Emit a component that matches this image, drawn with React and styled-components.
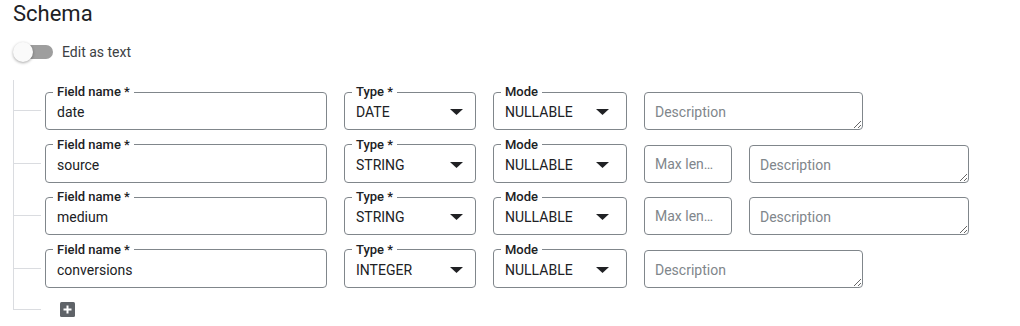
import React from "react";
import styled, { createGlobalStyle } from "styled-components";

const GlobalStyle = createGlobalStyle`
  body {
    margin: 0;
    background: #ffffff;
    font-family: Roboto, "Liberation Sans", Arial, sans-serif;
    color: #202124;
  }
`;

const Page = styled.div`
  padding: 0 13px 16px;
`;

const Heading = styled.h2`
  margin: 0;
  font-size: 22px;
  line-height: 28px;
  font-weight: 400;
  color: #202124;
`;

const ToggleRow = styled.label`
  display: flex;
  align-items: center;
  gap: 9px;
  height: 22px;
  margin-top: 13px;
  font-size: 14px;
  color: #3c4043;
`;

const Switch = styled.span`
  position: relative;
  display: block;
  width: 40px;
  height: 22px;
`;

const Track = styled.span`
  position: absolute;
  left: 6px;
  top: 4px;
  width: 34px;
  height: 14px;
  border-radius: 7px;
  background: #9e9e9e;
`;

const Thumb = styled.span`
  position: absolute;
  left: 0;
  top: 1px;
  width: 20px;
  height: 20px;
  border-radius: 50%;
  background: #fafafa;
  box-shadow: 0 1px 3px rgba(0, 0, 0, 0.35);
`;

const Tree = styled.div`
  margin-top: 17px;
  padding-top: 5px;
  border-left: 1px solid #dadce0;
  display: flex;
  flex-direction: column;
  gap: 7.5px;
`;

const Row = styled.div`
  display: flex;
  align-items: flex-end;
  height: 45px;
`;

const Connector = styled.span`
  flex: none;
  width: 27px;
  height: 1px;
  margin: 0 4px ${({ $lift }) => $lift}px 0;
  background: #dadce0;
`;

const Fields = styled.div`
  display: flex;
  align-items: flex-end;
  gap: 17px;
`;

const Outlined = styled.fieldset`
  box-sizing: border-box;
  width: ${({ $w }) => $w}px;
  height: 45px;
  min-width: 0;
  margin: 0;
  padding: 0 0 4px 7px;
  border: 1px solid #80868b;
  border-radius: 4px;
  display: flex;
  align-items: center;

  legend {
    padding: 0 4px;
    font-size: 13px;
    line-height: 14px;
    font-weight: 500;
    color: #202124;
  }
`;

const TextValue = styled.input`
  flex: 1;
  min-width: 0;
  border: none;
  outline: none;
  padding: 0 0 0 4px;
  font: 14px/20px Roboto, "Liberation Sans", Arial, sans-serif;
  color: #202124;
  background: transparent;
`;

const SelectValue = styled.span`
  flex: 1;
  padding-left: 4px;
  font-size: 14px;
  line-height: 20px;
  color: #202124;
`;

const Caret = styled.svg`
  flex: none;
  margin-right: ${({ $right }) => $right}px;
`;

const Plain = styled.input`
  box-sizing: border-box;
  width: ${({ $w }) => $w}px;
  height: 38px;
  margin: 0;
  padding: 0 10px;
  border: 1px solid #80868b;
  border-radius: 4px;
  outline: none;
  font: 14px/20px Roboto, "Liberation Sans", Arial, sans-serif;
  color: #202124;
  text-overflow: ellipsis;

  &::placeholder {
    color: #80868b;
  }
`;

const Description = styled.textarea`
  box-sizing: border-box;
  display: block;
  width: ${({ $w }) => $w}px;
  height: 38px;
  margin: 0;
  padding: 9px 10px 7px;
  border: 1px solid #80868b;
  border-radius: 4px;
  outline: none;
  overflow: hidden;
  resize: vertical;
  font: 14px/20px Roboto, "Liberation Sans", Arial, sans-serif;
  color: #202124;

  &::placeholder {
    color: #80868b;
  }
`;

const AddRow = styled.div`
  display: flex;
  align-items: center;
  height: 1px;
  margin-top: 13.5px;
`;

const AddButton = styled.svg`
  flex: none;
  margin-left: 15px;
  cursor: pointer;
`;

const fields = [
  { name: "date", type: "DATE", maxLength: false },
  { name: "source", type: "STRING", maxLength: true },
  { name: "medium", type: "STRING", maxLength: true },
  { name: "conversions", type: "INTEGER", maxLength: false },
];

function ArrowDown({ right }) {
  return (
    <Caret $right={right} width="13" height="6" viewBox="0 0 13 6">
      <path d="M0 0 L13 0 L6.5 6 Z" fill="#202124" />
    </Caret>
  );
}

function FieldRow({ field }) {
  return (
    <Row>
      <Connector $lift={19} />
      <Fields>
        <Outlined $w={282}>
          <legend>Field name *</legend>
          <TextValue defaultValue={field.name} />
        </Outlined>
        <Outlined $w={132}>
          <legend>Type *</legend>
          <SelectValue>{field.type}</SelectValue>
          <ArrowDown right={12} />
        </Outlined>
        <Outlined $w={134}>
          <legend>Mode</legend>
          <SelectValue>NULLABLE</SelectValue>
          <ArrowDown right={17} />
        </Outlined>
        {field.maxLength ? (
          <>
            <Plain $w={88} placeholder="Max length" />
            <Description $w={220} placeholder="Description" />
          </>
        ) : (
          <Description $w={219} placeholder="Description" />
        )}
      </Fields>
    </Row>
  );
}

export default function App() {
  return (
    <Page>
      <GlobalStyle />
      <Heading>Schema</Heading>
      <ToggleRow>
        <Switch>
          <Track />
          <Thumb />
        </Switch>
        Edit as text
      </ToggleRow>
      <Tree>
        {fields.map((f) => (
          <FieldRow key={f.name} field={f} />
        ))}
        <AddRow>
          <Connector $lift={0} />
          <AddButton width="15" height="15" viewBox="0 0 15 15">
            <rect x="0" y="0" width="15" height="15" rx="1.5" fill="#5f6368" />
            <path d="M7.5 3.5 V11.5 M3.5 7.5 H11.5" stroke="#ffffff" strokeWidth="2" />
          </AddButton>
        </AddRow>
      </Tree>
    </Page>
  );
}
